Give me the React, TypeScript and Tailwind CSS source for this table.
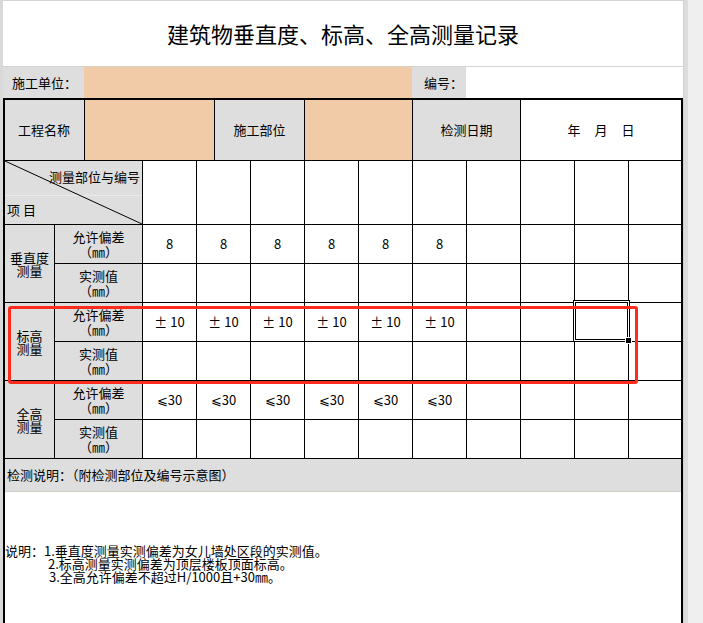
export default function App() {
  const groups = [
    { name: ['垂直度', '测量'], val: '8' },
    { name: ['标高', '测量'], val: '± 10' },
    { name: ['全高', '测量'], val: '⩽30' },
  ];
  const ten = Array.from({ length: 10 }, (_, i) => i);

  const dataCells = (val: string | null, key: string) =>
    ten.map((i) => (
      <div key={key + i} className="flex items-center justify-center bg-white text-[13px]">
        {val !== null && i < 6 ? val : ''}
      </div>
    ));

  const labelCell = (text: string, key: string) => (
    <div key={key} className="flex flex-col items-center justify-center bg-[#dedede] text-[13px] leading-[15px]">
      <span>{text}</span>
      <span>（㎜）</span>
    </div>
  );

  return (
    <div className="relative flex h-[623px] w-[703px] overflow-hidden bg-white font-['Noto_Sans_CJK_SC','Noto_Sans',sans-serif] text-black">
      <div className="w-[3px] shrink-0 bg-[#d9d9d9]" />
      <div className="flex w-[680px] shrink-0 flex-col">
        <div className="flex h-[67px] shrink-0 items-center justify-center border-y border-[#d6d3ce] text-[22px]">
          建筑物垂直度、标高、全高测量记录
        </div>
        <div className="flex h-[31px] shrink-0 text-[13px]">
          <div className="flex w-[81px] items-center bg-[#dedede] pl-[9px]">施工单位：</div>
          <div className="w-[328px] bg-[#f1cba8]" />
          <div className="flex w-[54px] items-center bg-[#dedede] pl-[12px]">编号：</div>
          <div className="w-[217px] bg-white" />
        </div>
        <div className="flex flex-1 flex-col border-x-2 border-t-2 border-black">
          <div className="flex h-[61px] shrink-0 border-b border-black text-[13px]">
            <div className="flex w-[80px] items-center justify-center border-r border-black bg-[#dedede] pr-px">工程名称</div>
            <div className="w-[130px] border-r border-black bg-[#f1cba8]" />
            <div className="flex w-[90px] items-center justify-center border-r border-black bg-[#dedede]">施工部位</div>
            <div className="w-[108px] border-r border-black bg-[#f1cba8]" />
            <div className="flex w-[108px] items-center justify-center border-r border-black bg-[#dedede]">检测日期</div>
            <div className="flex w-[160px] items-center justify-center gap-[14px] bg-white">
              <span>年</span>
              <span>月</span>
              <span>日</span>
            </div>
          </div>
          <div className="grid shrink-0 grid-cols-[49px_87px_repeat(9,53px)_52px] grid-rows-[63px_repeat(6,38px)] gap-px border-b border-black bg-black">
            <div className="relative col-span-2 bg-[#dedede] text-[13px]">
              <div className="absolute left-0 right-0 top-[34px] h-px bg-[#ebebeb]" />
              <svg className="absolute inset-0" width="137" height="63" viewBox="0 0 137 63">
                <line x1="0" y1="0" x2="137" y2="63" stroke="#000" strokeWidth="1" />
              </svg>
              <span className="absolute right-[2px] top-[6px] leading-[20px]">测量部位与编号</span>
              <span className="absolute left-[2px] top-[39px] leading-[20px]">项&nbsp;目</span>
            </div>
            {dataCells(null, 'h')}
            {groups.map((g, gi) => [
              <div key={'g' + gi} className="row-span-2 flex flex-col items-center justify-center bg-[#dedede] text-[13px] leading-[13px]">
                <span>{g.name[0]}</span>
                <span>{g.name[1]}</span>
              </div>,
              labelCell('允许偏差', 'a' + gi),
              ...dataCells(g.val, 'av' + gi),
              labelCell('实测值', 'm' + gi),
              ...dataCells(null, 'mv' + gi),
            ])}
          </div>
          <div className="flex h-[33px] shrink-0 items-center border-b border-[#d4d0c8] bg-[#dedede] pl-[2px] text-[13px]">
            检测说明：（附检测部位及编号示意图）
          </div>
          <div className="flex-1 whitespace-pre bg-white pt-[52px] text-[13px] leading-[13px]">
            <div>说明：1.垂直度测量实测偏差为女儿墙处区段的实测值。</div>
            <div className="pl-[43px]">2.标高测量实测偏差为顶层楼板顶面标高。</div>
            <div className="pl-[44px]">3.全高允许偏差不超过H/1000且+30㎜。</div>
          </div>
        </div>
      </div>
      <div className="w-px shrink-0 bg-[#d4d0c8]" />
      <div className="w-[4px] shrink-0 bg-[#dcdcdc]" />
      <div className="flex-1 bg-[#efefef]" />

      <div className="absolute left-[573px] top-[300px] h-[42px] w-[57px] border border-black">
        <div className="h-full w-full border border-white">
          <div className="h-full w-full border border-black" />
        </div>
      </div>
      <div className="absolute left-[625px] top-[337px] h-[7px] w-[7px] bg-white p-px">
        <div className="h-full w-full bg-black" />
      </div>
      <div className="absolute left-[8px] top-[306px] h-[78px] w-[630px] rounded-[3px] border-[3px] border-[#ff2b1c]" />
    </div>
  );
}
